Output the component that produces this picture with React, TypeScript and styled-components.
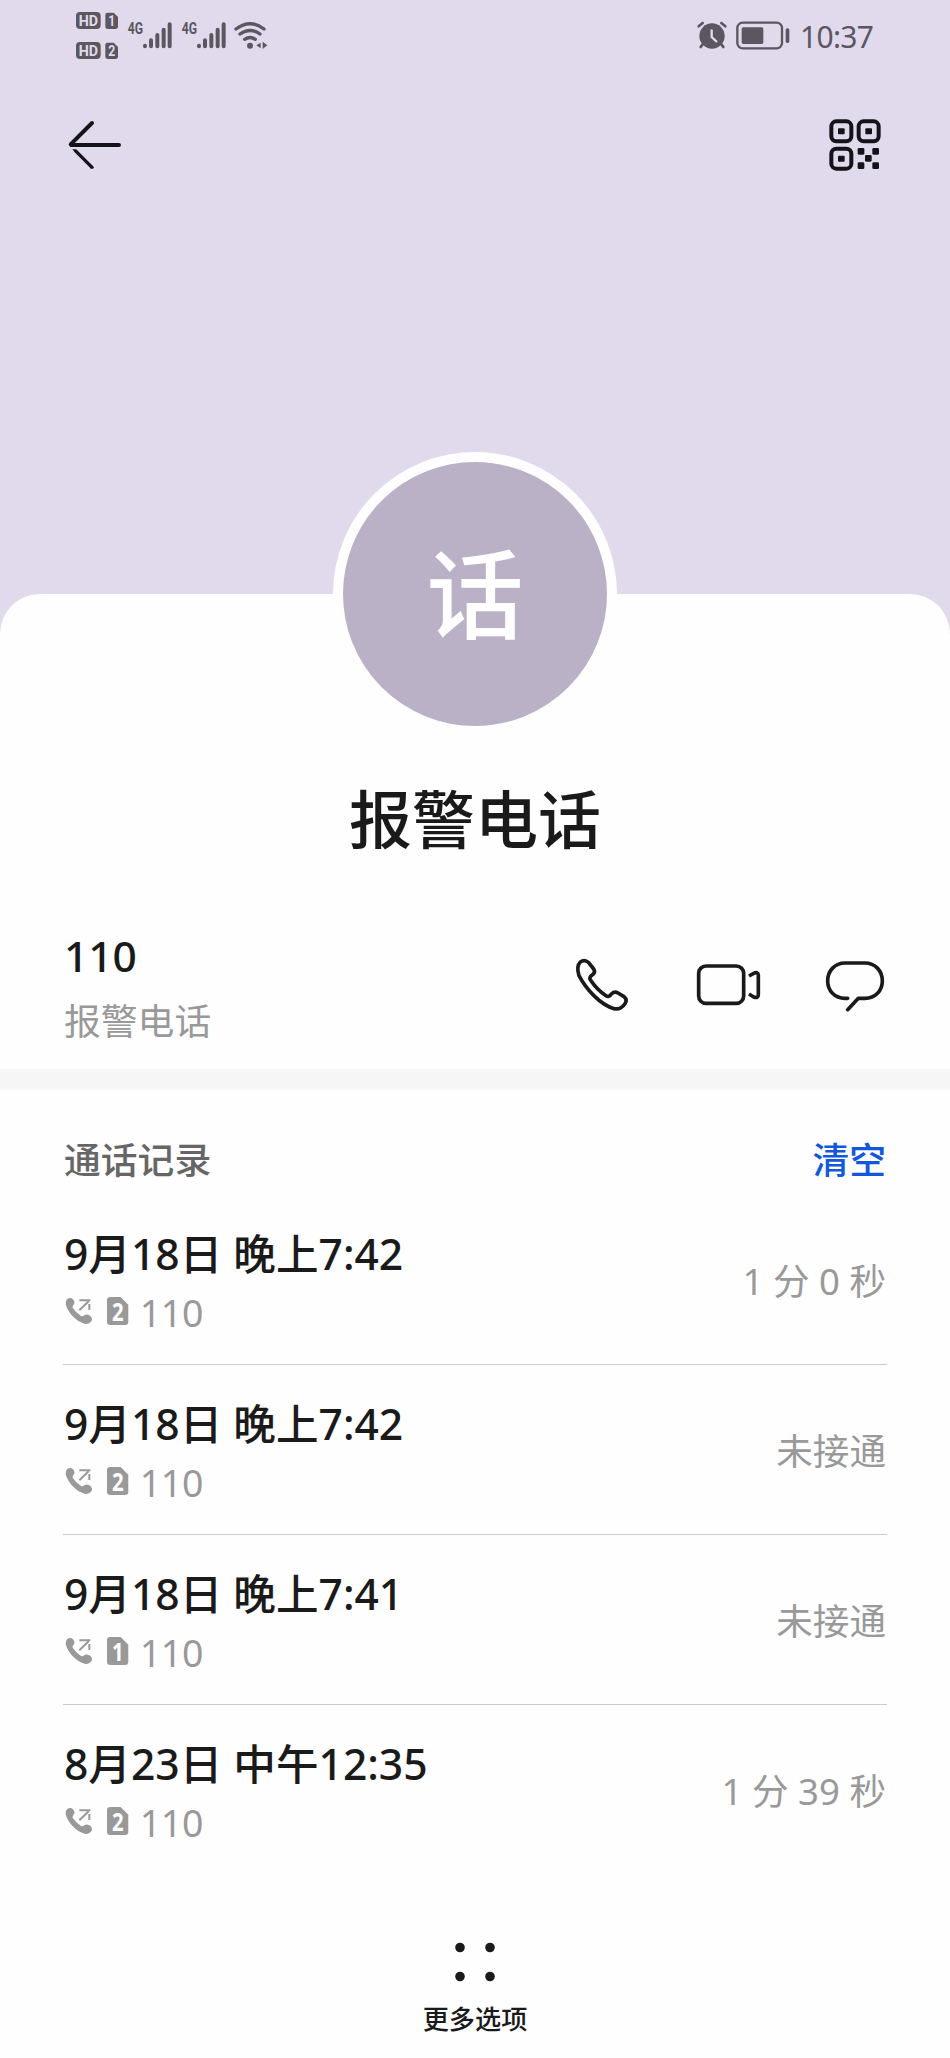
import React from "react";
import styled, { createGlobalStyle } from "styled-components";

const GlobalStyle = createGlobalStyle`
  *, *::before, *::after { box-sizing: border-box; }
  body {
    margin: 0;
    background: #fefefe;
    font-family: "Noto Sans", "Noto Sans CJK SC", sans-serif;
    color: #1a1a1a;
  }
  svg { display: block; flex: none; overflow: visible; }
`;

const statusInk = "#5b5660";

const Screen = styled.main`
  width: 950px;
  height: 2058px;
  display: flex;
  flex-direction: column;
  overflow: hidden;
  background: #e0daec;
`;

const StatusBar = styled.div`
  height: 70px;
  flex: none;
  display: flex;
  justify-content: space-between;
  align-items: flex-start;
  padding: 12px 76px 0;
  color: ${statusInk};
`;

const StatusGroup = styled.div`
  display: flex;
  align-items: flex-start;
`;

const HdStack = styled.div`
  display: flex;
  flex-direction: column;
  gap: 13px;
  margin-right: 8px;
`;

const Signal = styled.div`
  display: flex;
  width: 53.7px;
  padding-top: 9px;
`;

const StatusIcons = styled.div<{ $gap?: number }>`
  display: flex;
  padding-top: 9px;
  margin-right: ${(p) => p.$gap ?? 0}px;
`;

const Clock = styled.span`
  margin: 8px 0 0 10px;
  height: 34px;
  width: 74px;
  font-size: 30px;
  line-height: 34px;
  letter-spacing: -0.7px;
  white-space: nowrap;
`;

const NavBar = styled.header`
  flex: none;
  display: flex;
  justify-content: space-between;
  align-items: center;
  height: 150px;
  padding: 0 68px;
`;

const IconButton = styled.button`
  border: 0;
  padding: 0;
  background: none;
  color: inherit;
  font: inherit;
`;

const Sheet = styled.section`
  flex: 1;
  margin-top: 373.5px;
  border-radius: 40px 40px 0 0;
  background: #fefefe;
  display: flex;
  flex-direction: column;
  align-items: center;
`;

const Avatar = styled.div`
  width: 284px;
  height: 284px;
  flex: none;
  margin-top: -142px;
  padding-bottom: 10px;
  border: 10px solid #fefefe;
  border-radius: 50%;
  background: #bab1c7;
  color: #fff;
  display: flex;
  justify-content: center;
  align-items: center;
  font: 500 97px/140px "Noto Sans CJK SC", sans-serif;
`;

const ContactName = styled.h1`
  margin: 34.5px 0 2px;
  height: 92px;
  font: 500 63px/92px "Noto Sans CJK SC", sans-serif;
`;

const NumberRow = styled.div`
  align-self: stretch;
  height: 205px;
  flex: none;
  padding: 61.5px 65px 0 64px;
  display: flex;
  justify-content: space-between;
`;

const NumberText = styled.div`
  display: flex;
  flex-direction: column;
`;

const PhoneNumber = styled.span`
  height: 60px;
  font-size: 42.5px;
  line-height: 60px;
  font-weight: 500;
`;

const NumberLabel = styled.span`
  margin-top: 6px;
  height: 54px;
  font: 400 36.8px/54px "Noto Sans CJK SC", sans-serif;
  color: #999;
`;

const Actions = styled.div`
  display: flex;
  margin-top: 32px;
  height: 54px;
`;

const ActionButton = styled(IconButton)<{ $gap?: number }>`
  margin-left: ${(p) => p.$gap ?? 0}px;
`;

const Band = styled.div`
  align-self: stretch;
  flex: none;
  height: 21px;
  background: #f6f6f6;
`;

const History = styled.div`
  align-self: stretch;
  padding: 0 63px;
`;

const HistoryHeader = styled.div`
  height: 105px;
  padding: 40px 1px 0;
  display: flex;
  justify-content: space-between;
  font: 500 36.8px/56px "Noto Sans CJK SC", sans-serif;
  color: #666;
`;

const ClearButton = styled(IconButton)`
  height: 56px;
  color: #1257dc;
`;

const CallRow = styled.div<{ $last?: boolean }>`
  height: 170px;
  padding: 28px 1px 0;
  display: flex;
  justify-content: space-between;
  border-bottom: 1px solid ${(p) => (p.$last ? "transparent" : "#cbcbcb")};
`;

const CallInfo = styled.div`
  display: flex;
  flex-direction: column;
`;

const CallTime = styled.span`
  height: 60px;
  font-size: 42.6px;
  line-height: 60px;
  font-weight: 500;
  white-space: nowrap;
`;

const CallMeta = styled.div`
  height: 50px;
  display: flex;
  padding-left: 1px;
  padding-top: 13.5px;
`;

const CallNumber = styled.span`
  margin: -8.5px 0 0 11.5px;
  font-size: 37.5px;
  line-height: 50px;
  letter-spacing: -0.4px;
  color: #999;
`;

const SimMark = styled.div`
  margin-left: 14px;
`;

const Duration = styled.span`
  margin-top: 31px;
  height: 54px;
  font-size: 36.6px;
  line-height: 54px;
  color: #999;
`;

const MoreButton = styled(IconButton)`
  margin-top: 67px;
  display: flex;
  flex-direction: column;
  align-items: center;
  gap: 16px;
`;

const MoreLabel = styled.span`
  height: 40px;
  font: 500 26.2px/40px "Noto Sans CJK SC", sans-serif;
`;

const SIM_SHAPE = "M10 0H41L64 23V74Q64 84 54 84H10Q0 84 0 74V10Q0 0 10 0Z";

function SimIcon({ slot }: { slot: number }) {
  return (
    <svg width="21.3" height="28" viewBox="0 0 64 84">
      <path d={SIM_SHAPE} fill="#999" />
      <text x="15" y="71" fontFamily="Noto Sans" fontWeight="700" fontSize="76" fill="#fff" textLength="35" lengthAdjust="spacingAndGlyphs">
        {slot}
      </text>
    </svg>
  );
}

function HdIcon({ slot }: { slot: number }) {
  return (
    <svg width="43" height="17" viewBox="0 0 129 51">
      <rect width="74" height="51" rx="12" fill={statusInk} />
      <text x="8" y="42" fontFamily="Roboto" fontWeight="700" fontSize="46" fill="#e0daec" textLength="58" lengthAdjust="spacingAndGlyphs">
        HD
      </text>
      <path d="M94 2H113L126 15V43Q126 51 118 51H96Q88 51 88 43V8Q88 2 94 2Z" fill={statusInk} />
      <text x="97" y="43" fontFamily="Roboto" fontWeight="700" fontSize="46" fill="#e0daec" textLength="21" lengthAdjust="spacingAndGlyphs">
        {slot}
      </text>
    </svg>
  );
}

function SignalIcon() {
  return (
    <svg width="46" height="28" viewBox="0 0 138 84" stroke={statusInk} strokeWidth="12" strokeLinecap="round">
      <text x="2" y="38" fontFamily="Roboto" fontWeight="700" fontSize="49" fill={statusInk} stroke="none" textLength="46" lengthAdjust="spacingAndGlyphs">
        4G
      </text>
      <path d="M54 74V76M72 58V76M91 42V76M110 26V76M128 10V76" />
    </svg>
  );
}

function WifiIcon() {
  return (
    <svg width="34" height="29" viewBox="0 0 102 87" fill="none" stroke={statusInk} strokeWidth="10" strokeLinecap="round">
      <path d="M6 24Q48-8 90 24M18 39Q48 18 78 39M32 55Q48 44 64 55" />
      <circle cx="48" cy="74" r="9" fill={statusInk} stroke="none" />
      <path d="M80 65V82L67 73ZM86 62L100 73L86 84Z" fill={statusInk} stroke="none" />
    </svg>
  );
}

function AlarmIcon() {
  return (
    <svg width="30" height="28" viewBox="0 0 90 84" fill="none" stroke={statusInk} strokeLinecap="round">
      <circle cx="45" cy="45" r="38" fill={statusInk} stroke="none" />
      <path d="M5 16L17 6M85 16L73 6M17 70L11 78M73 70L79 78" strokeWidth="8" />
      <path d="M44 28V48L58 61" stroke="#e0daec" strokeWidth="7" />
    </svg>
  );
}

function BatteryIcon() {
  return (
    <svg width="54" height="28" viewBox="0 0 162 84">
      <rect x="4" y="5" width="134" height="77" rx="16" fill="none" stroke={statusInk} strokeWidth="7" />
      <rect x="17" y="19" width="65" height="50" rx="5" fill={statusInk} />
      <rect x="149" y="22" width="11" height="44" rx="5" fill={statusInk} />
    </svg>
  );
}

function BackIcon() {
  return (
    <svg width="54" height="50" viewBox="54 60 162 150" fill="none" stroke="#15131a" strokeWidth="12" strokeLinecap="round" strokeLinejoin="round">
      <path d="M126 69L62 133L64 135H207" />
      <path d="M76 152L126 202" strokeWidth="10" strokeLinecap="butt" />
      <path d="M67 148H79V156H74Z" fill="#15131a" stroke="none" />
      <circle cx="126" cy="202" r="5" fill="#15131a" stroke="none" />
    </svg>
  );
}

function QrIcon() {
  const dots = [[143, 144], [187, 144], [165, 165], [143, 187], [187, 187]];
  return (
    <svg width="54" height="54" viewBox="54 54 162 162" fill="#15131a">
      {[[64, 64], [146, 64], [64, 146]].map(([x, y]) => (
        <g key={`${x}-${y}`}>
          <rect x={x} y={y} width="60" height="60" rx="15" fill="none" stroke="#15131a" strokeWidth="12" />
          <rect x={x + 20} y={y + 21} width="20" height="18" rx="3" />
        </g>
      ))}
      {dots.map(([x, y]) => (
        <rect key={`${x}-${y}`} x={x} y={y} width="20" height="20" rx="4" />
      ))}
    </svg>
  );
}

const actionStroke = {
  fill: "none",
  stroke: "#1a1a1a",
  strokeWidth: 11,
  strokeLinecap: "round" as const,
  strokeLinejoin: "round" as const,
};

function PhoneIcon() {
  return (
    <svg width="54" height="54" viewBox="75 84 162 162" {...actionStroke}>
      <path d="M91 96Q104 87 116 98L131 117Q137 126 129 133Q116 142 121 149C134 169 150 185 168 197Q177 203 184 192Q194 183 204 189L222 200Q233 210 225 221Q212 240 192 236C150 224 108 177 87 137Q78 109 91 96Z" />
    </svg>
  );
}

function VideoIcon() {
  return (
    <svg width="66" height="54" viewBox="438 84 198 162" {...actionStroke}>
      <rect x="446" y="108" width="135" height="112" rx="22" />
      <path d="M597 138L611 130Q625 124 625 136V194Q625 206 611 201L597 192" strokeLinecap="butt" />
    </svg>
  );
}

function ChatIcon() {
  return (
    <svg width="60" height="54" viewBox="825 84 180 162" {...actionStroke}>
      <path d="M893 205H885C854 205 833 182 833 153C833 122 855 99 885 99H945C975 99 997 122 997 153C997 182 976 205 945 205H925L893 239" />
    </svg>
  );
}

function OutgoingIcon() {
  return (
    <svg width="28" height="28" viewBox="76 261 84 84">
      <path
        fill="#999"
        d="M82 268Q92 260 100 268Q107 277 103 283Q97 288 99 293Q108 307 124 318Q130 320 135 315Q141 311 149 316Q158 322 157 331Q150 343 137 342C110 335 85 310 78 283Q77 273 82 268Z"
      />
      <path d="M119 301L147 274M119 271H152M149 282V300" fill="none" stroke="#999" strokeWidth="6" />
    </svg>
  );
}

function MoreIcon() {
  return (
    <svg width="40" height="40" viewBox="0 0 40 40" fill="#1a1a1a">
      <circle cx="5" cy="5.5" r="4.8" />
      <circle cx="35" cy="5.5" r="4.8" />
      <circle cx="5" cy="34.5" r="4.8" />
      <circle cx="35" cy="34.5" r="4.8" />
    </svg>
  );
}

const calls = [
  { time: "9月18日 晚上7:42", sim: 2, number: "110", result: "1 分 0 秒" },
  { time: "9月18日 晚上7:42", sim: 2, number: "110", result: "未接通" },
  { time: "9月18日 晚上7:41", sim: 1, number: "110", result: "未接通" },
  { time: "8月23日 中午12:35", sim: 2, number: "110", result: "1 分 39 秒" },
];

export default function App() {
  return (
    <Screen>
      <GlobalStyle />
      <StatusBar>
        <StatusGroup>
          <HdStack>
            <HdIcon slot={1} />
            <HdIcon slot={2} />
          </HdStack>
          <Signal>
            <SignalIcon />
          </Signal>
          <Signal>
            <SignalIcon />
          </Signal>
          <StatusIcons>
            <WifiIcon />
          </StatusIcons>
        </StatusGroup>
        <StatusGroup>
          <StatusIcons $gap={9}>
            <AlarmIcon />
          </StatusIcons>
          <StatusIcons>
            <BatteryIcon />
          </StatusIcons>
          <Clock>10:37</Clock>
        </StatusGroup>
      </StatusBar>
      <NavBar>
        <IconButton><BackIcon /></IconButton>
        <IconButton><QrIcon /></IconButton>
      </NavBar>
      <Sheet>
        <Avatar>话</Avatar>
        <ContactName>报警电话</ContactName>
        <NumberRow>
          <NumberText>
            <PhoneNumber>110</PhoneNumber>
            <NumberLabel>报警电话</NumberLabel>
          </NumberText>
          <Actions>
            <ActionButton><PhoneIcon /></ActionButton>
            <ActionButton $gap={67}><VideoIcon /></ActionButton>
            <ActionButton $gap={63}><ChatIcon /></ActionButton>
          </Actions>
        </NumberRow>
        <Band />
        <History>
          <HistoryHeader>
            <span>通话记录</span>
            <ClearButton>清空</ClearButton>
          </HistoryHeader>
          {calls.map((call, i) => (
            <CallRow key={i} $last={i === calls.length - 1}>
              <CallInfo>
                <CallTime>{call.time}</CallTime>
                <CallMeta>
                  <OutgoingIcon />
                  <SimMark>
                    <SimIcon slot={call.sim} />
                  </SimMark>
                  <CallNumber>{call.number}</CallNumber>
                </CallMeta>
              </CallInfo>
              <Duration>{call.result}</Duration>
            </CallRow>
          ))}
        </History>
        <MoreButton>
          <MoreIcon />
          <MoreLabel>更多选项</MoreLabel>
        </MoreButton>
      </Sheet>
    </Screen>
  );
}
